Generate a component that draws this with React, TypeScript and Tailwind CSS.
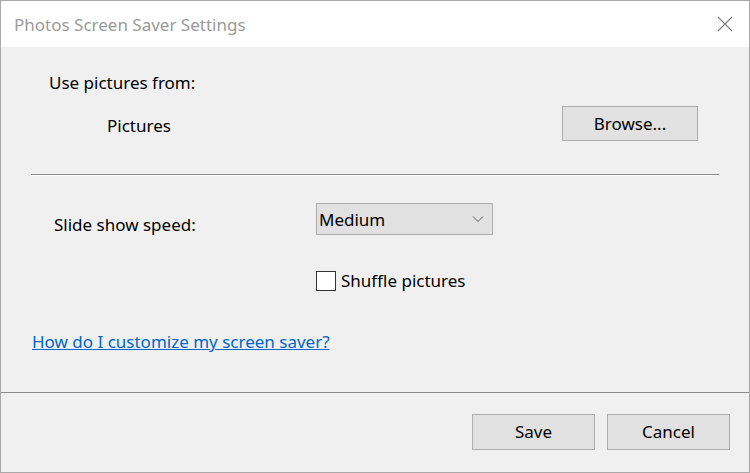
import React from 'react';

const font = { fontFamily: '"Noto Sans", "Open Sans", sans-serif' };

const Chevron: React.FC = () => (
  <svg width="12" height="8" viewBox="0 0 12 8" fill="none">
    <path d="M1 1.5 L6 6.5 L11 1.5" stroke="#555" strokeWidth="1" />
  </svg>
);

const CloseIcon: React.FC = () => (
  <svg width="16" height="16" viewBox="0 0 16 16" fill="none">
    <path d="M1 1 L15 15 M15 1 L1 15" stroke="#7a7a7a" strokeWidth="1.1" />
  </svg>
);

const WinButton: React.FC<{ label: string; className?: string }> = ({ label, className }) => (
  <button
    className={`flex items-center justify-center bg-[#e1e1e1] border border-[#adadad] text-[17px] text-black ${className ?? ''}`}
  >
    {label}
  </button>
);

export default function App() {
  return (
    <div
      className="w-[750px] h-[473px] flex flex-col bg-[#f0f0f0] border border-[#a8a8a8] overflow-hidden"
      style={font}
    >
      {/* title bar */}
      <div className="h-[46px] shrink-0 bg-white flex items-center justify-between pl-[13px] pr-[16px]">
        <span className="text-[17px] text-[#9a9a9a] leading-none">Photos Screen Saver Settings</span>
        <CloseIcon />
      </div>

      {/* main */}
      <div className="flex-1 flex flex-col text-[17px] text-black">
        <div className="pl-[48px] pt-[24px] leading-[23px]">Use pictures from:</div>

        <div className="flex items-center justify-between pl-[106px] pr-[51px] mt-[12px]">
          <span className="leading-[23px] mt-[4px]">Pictures</span>
          <WinButton label="Browse..." className="w-[136px] h-[35px]" />
        </div>

        <div className="mx-[30px] mt-[33px] h-[2px] border-t border-[#8a8a8a] border-b border-b-white" />

        <div className="flex items-start mt-[27px]">
          <span className="pl-[53px] w-[315px] leading-[23px] mt-[10px]">Slide show speed:</span>
          <div className="w-[177px] h-[32px] bg-[#e1e1e1] border border-[#adadad] flex items-center justify-between pl-[2px] pr-[8px]">
            <span className="leading-[23px]">Medium</span>
            <Chevron />
          </div>
        </div>

        <div className="flex items-center ml-[315px] mt-[33px] gap-[5px]">
          <div className="w-[20px] h-[20px] bg-white border border-[#333]" />
          <span className="leading-[23px]">Shuffle pictures</span>
        </div>

        <div className="pl-[31px] mt-[37px]">
          <a href="#" className="text-[#0066cc] underline leading-[23px]">
            How do I customize my screen saver?
          </a>
        </div>
      </div>

      {/* footer */}
      <div className="h-[80px] shrink-0 border-t border-[#8a8a8a] flex items-start justify-end gap-[12px] pr-[19px] pt-[21px]">
        <WinButton label="Save" className="w-[123px] h-[36px]" />
        <WinButton label="Cancel" className="w-[123px] h-[36px]" />
      </div>
    </div>
  );
}
